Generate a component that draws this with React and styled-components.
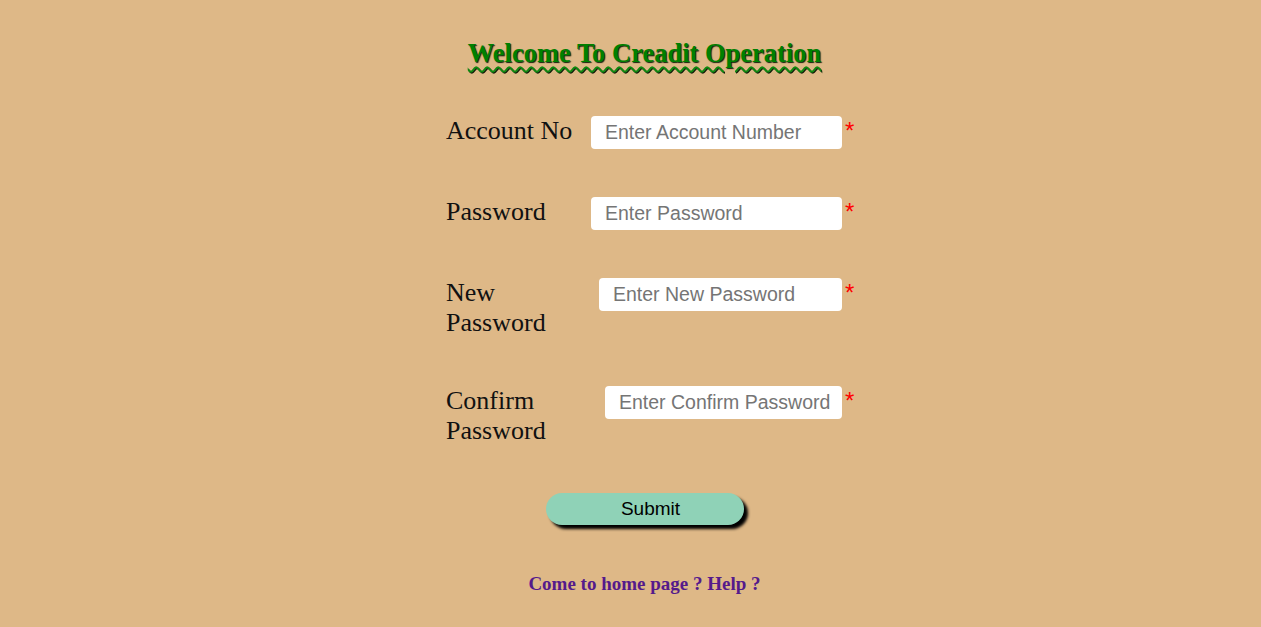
import React from "react";
import styled, { createGlobalStyle } from "styled-components";

const GlobalStyle = createGlobalStyle`
  html, body {
    margin: 0;
    padding: 0;
    background: #deb887;
  }
  body {
    font-family: "Liberation Serif", "Times New Roman", serif;
  }
`;

const Page = styled.div`
  min-height: 627px;
  box-sizing: border-box;
  display: flex;
  flex-direction: column;
  align-items: center;
  padding: 38px 0 0 28px;
`;

const Title = styled.h2`
  margin: 0;
  font-size: 26.5px;
  line-height: 30px;
  font-weight: bold;
  color: #008000;
  text-decoration: underline wavy #0f8a0f;
  text-decoration-thickness: 2px;
  text-underline-offset: 4px;
  text-shadow: 1px 1px 1px #14200c;
`;

const Form = styled.form`
  margin: 48px 0 0 12px;
  display: grid;
  grid-template-columns: 145px 251px 13px;
  row-gap: 48px;
  align-items: start;
`;

const Label = styled.label`
  font-size: 26px;
  line-height: 30px;
  color: #111;
  width: ${(p) => p.$width || "auto"};
`;

const Input = styled.input`
  justify-self: end;
  box-sizing: border-box;
  width: ${(p) => p.$width}px;
  height: 33px;
  margin: 0;
  padding: 0 0 0 14px;
  border: none;
  border-radius: 4px;
  background: #fff;
  font-family: "Liberation Sans", Arial, sans-serif;
  font-size: 19.5px;
  outline: none;
  &::placeholder {
    color: #757575;
  }
`;

const Star = styled.span`
  margin-top: 3px;
  padding-left: 3px;
  color: #f00;
  font-family: "Liberation Sans", Arial, sans-serif;
  font-size: 24px;
  line-height: 24px;
`;

const Submit = styled.button`
  margin-top: 47px;
  width: 198px;
  height: 32px;
  border: none;
  border-radius: 16px;
  background: #8fd2b7;
  box-shadow: 4px 4px 3px #000;
  font-family: "Liberation Sans", Arial, sans-serif;
  font-size: 19px;
  color: #000;
  padding: 0 0 0 12px;
  cursor: pointer;
`;

const Links = styled.p`
  margin: 48px 0 0 0;
  font-size: 19px;
  font-weight: bold;
  line-height: 22px;
  a {
    color: #551a8b;
    text-decoration: none;
  }
`;

const fields = [
  { label: "Account No", placeholder: "Enter Account Number", width: 251, type: "text" },
  { label: "Password", placeholder: "Enter Password", width: 251, type: "password" },
  { label: "New Password", placeholder: "Enter New Password", width: 243, type: "password", wrap: "110px" },
  { label: "Confirm Password", placeholder: "Enter Confirm Password", width: 237, type: "password", wrap: "110px" },
];

export default function App() {
  return (
    <>
      <GlobalStyle />
      <Page>
        <Title>Welcome To Creadit Operation</Title>
        <Form onSubmit={(e) => e.preventDefault()}>
          {fields.map((f) => (
            <React.Fragment key={f.label}>
              <Label $width={f.wrap}>{f.label}</Label>
              <Input type={f.type} placeholder={f.placeholder} $width={f.width} />
              <Star>*</Star>
            </React.Fragment>
          ))}
        </Form>
        <Submit type="submit">Submit</Submit>
        <Links>
          <a href="#home">Come to home page ?</a> <a href="#help">Help ?</a>
        </Links>
      </Page>
    </>
  );
}
